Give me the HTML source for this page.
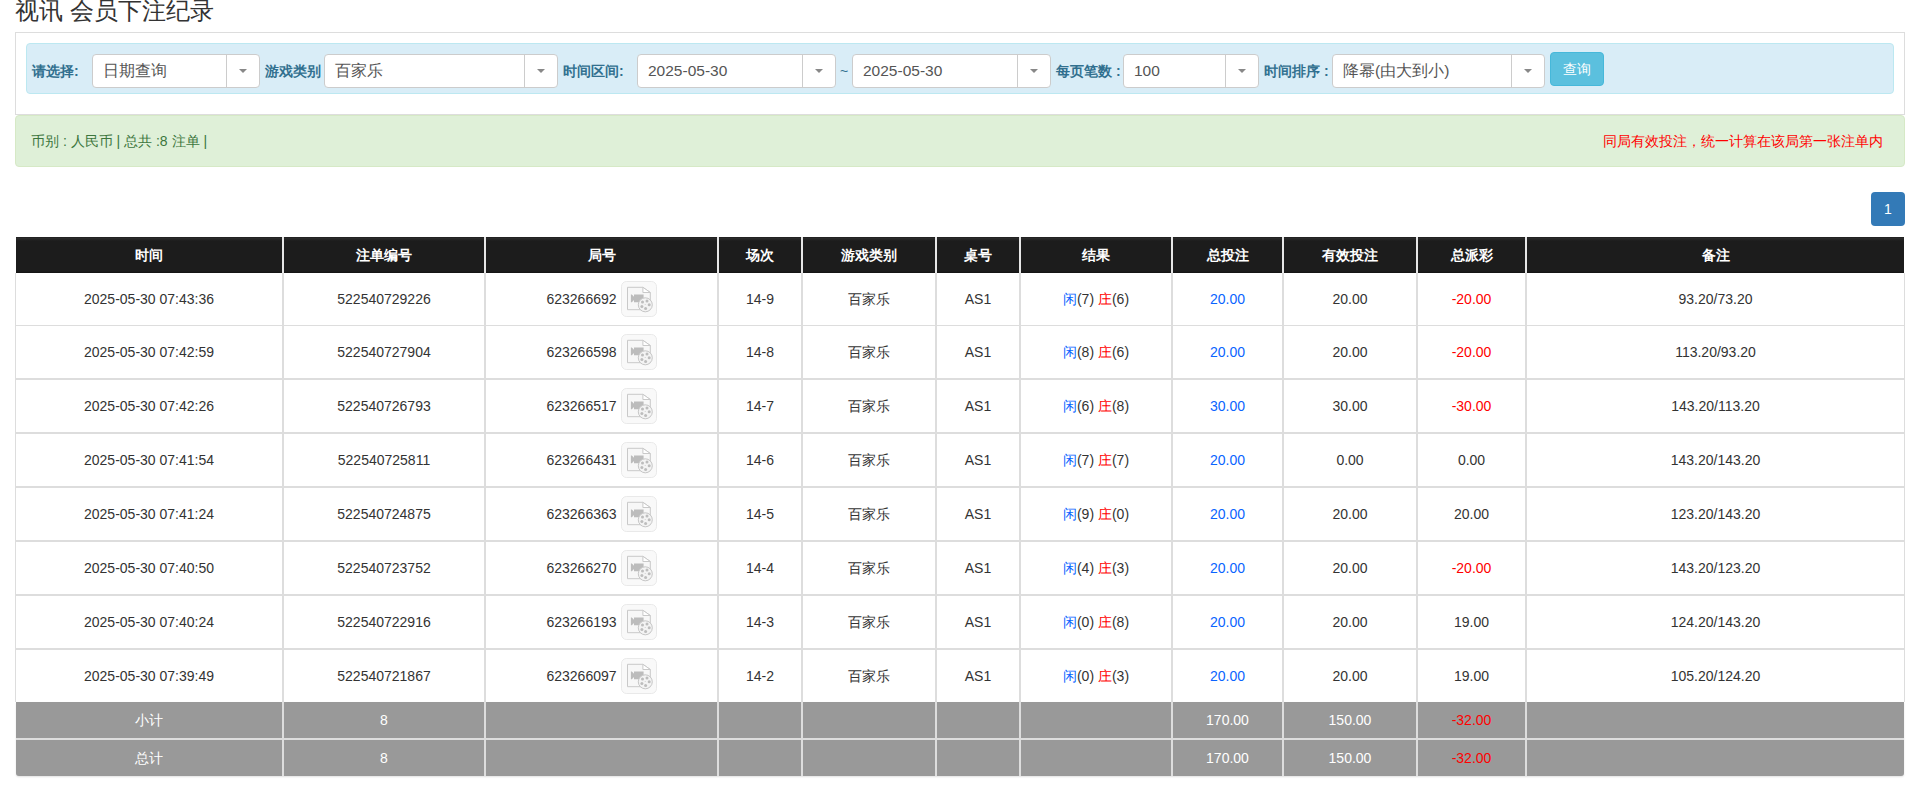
<!DOCTYPE html><html><head><meta charset="utf-8"><style>
html,body{margin:0;padding:0;background:#fff;width:1906px;height:791px;overflow:hidden;position:relative;font-family:"Liberation Sans",sans-serif;color:#333;font-size:14px}
.abs{position:absolute}
.title{position:absolute;left:15px;top:-4px;font-size:24px;line-height:30px;color:#333;white-space:nowrap}
.panel{position:absolute;left:15px;top:32px;width:1888px;height:81px;border:1px solid #ddd;border-bottom:1px solid #ddd;background:#fff}
.info{position:absolute;left:26px;top:43px;width:1866px;height:49px;background:#d9edf7;border:1px solid #bce8f1;border-radius:4px}
.lbl{position:absolute;top:63px;font-size:14px;line-height:16px;font-weight:bold;color:#31708f;white-space:nowrap}
.sel{position:absolute;top:54px;height:32px;background:#fff;border:1px solid #ccc;border-radius:4px;box-sizing:content-box}
.sel .t{position:absolute;left:10px;top:7px;font-size:15.5px;line-height:17px;color:#555;white-space:nowrap}
.sel .sep{position:absolute;top:0;bottom:0;width:1px;background:#ccc}
.sel .arr{position:absolute;top:14px;width:0;height:0;border-left:4px solid transparent;border-right:4px solid transparent;border-top:4px solid #888}
.btn{position:absolute;left:1550px;top:52px;width:52px;height:32px;background:#5bc0de;border:1px solid #46b8da;border-radius:4px;color:#fff;font-size:14px;line-height:32px;text-align:center}
.ok{position:absolute;left:15px;top:115px;width:1888px;height:50px;background:#dff0d8;border:1px solid #d6e9c6;border-radius:4px}
.oktxt{position:absolute;left:31px;top:133px;font-size:14px;line-height:16px;color:#3c763d;white-space:nowrap}
.redtxt{position:absolute;right:23px;top:133px;font-size:14px;line-height:16px;color:#f00;white-space:nowrap}
.page{position:absolute;left:1871px;top:192px;width:34px;height:34px;background:#337ab7;border-radius:4px;color:#fff;font-size:14px;line-height:34px;text-align:center}
.row{position:absolute;left:0;width:1906px}
.c{position:absolute;top:0;bottom:0;text-align:center;white-space:nowrap}
.hd{top:237px;height:36px;}
.hd .c{background:linear-gradient(#1f1f1f,#2a2a2a 1.5px,#1c1c1c 4px,#1c1c1c 34px,#121212 36px);color:#fff;font-weight:bold;line-height:36px}
.bd .c{background:#fff;line-height:52px}
.ft .c{background:#999;color:#fff;line-height:36px}
.ft2 .c:first-child{border-bottom-left-radius:3px}.ft2 .c:last-child{border-bottom-right-radius:3px}
.vl{position:absolute;background:#ddd}
.vbtn{display:inline-block;vertical-align:middle;margin-left:4px;position:relative;top:-1px}
.b{color:#0a64ff}.r{color:#f00}
</style></head><body>
<div class="title">视讯 会员下注纪录</div>
<div class="panel"></div><div class="info"></div>
<div class="lbl" style="left:32px">请选择:</div>
<div class="sel" style="left:92px;width:166px"><span class="t">日期查询</span><span class="sep" style="left:133px"></span><span class="arr" style="left:146px"></span></div>
<div class="lbl" style="left:265px">游戏类别</div>
<div class="sel" style="left:324px;width:232px"><span class="t">百家乐</span><span class="sep" style="left:199px"></span><span class="arr" style="left:212px"></span></div>
<div class="lbl" style="left:563px">时间区间:</div>
<div class="sel" style="left:637px;width:197px"><span class="t">2025-05-30</span><span class="sep" style="left:164px"></span><span class="arr" style="left:177px"></span></div>
<div class="lbl" style="left:840px;font-weight:normal">~</div>
<div class="sel" style="left:852px;width:197px"><span class="t">2025-05-30</span><span class="sep" style="left:164px"></span><span class="arr" style="left:177px"></span></div>
<div class="lbl" style="left:1056px">每页笔数 :</div>
<div class="sel" style="left:1123px;width:134px"><span class="t">100</span><span class="sep" style="left:101px"></span><span class="arr" style="left:114px"></span></div>
<div class="lbl" style="left:1264px">时间排序 :</div>
<div class="sel" style="left:1332px;width:211px"><span class="t">降幂(由大到小)</span><span class="sep" style="left:178px"></span><span class="arr" style="left:191px"></span></div>
<div class="btn">查询</div>
<div class="ok"></div><div class="oktxt">币别 : 人民币 | 总共 :8 注单 |</div><div class="redtxt">同局有效投注，统一计算在该局第一张注单内</div>
<div class="page">1</div>
<div class="vl" style="left:16px;top:237px;width:1888px;height:36px;background:#e6e6e6"></div>
<div class="vl" style="left:15px;top:273px;width:1890px;height:429px"></div>
<div class="row hd"><div class="c " style="left:16px;width:266px">时间</div><div class="c " style="left:284px;width:200px">注单编号</div><div class="c " style="left:486px;width:231px">局号</div><div class="c " style="left:719px;width:82px">场次</div><div class="c " style="left:803px;width:132px">游戏类别</div><div class="c " style="left:937px;width:82px">桌号</div><div class="c " style="left:1021px;width:150px">结果</div><div class="c " style="left:1173px;width:109px">总投注</div><div class="c " style="left:1284px;width:132px">有效投注</div><div class="c " style="left:1418px;width:107px">总派彩</div><div class="c " style="left:1527px;width:377px">备注</div></div>
<div class="row bd" style="top:273px;height:52px"><div class="c " style="left:16px;width:266px">2025-05-30 07:43:36</div><div class="c " style="left:284px;width:200px">522540729226</div><div class="c " style="left:486px;width:231px">623266692<svg class="vbtn" width="36" height="36" viewBox="0 0 36 36"><rect x="0.5" y="0.5" width="35" height="35" rx="5" fill="#f9f9f9" stroke="#e9e9e9"/><path d="M6.5 6.3h15.4l7.4 5.2v17.2h-22.8z" fill="#f7f7f7" stroke="#c9c9c9" stroke-width="1"/><path d="M21.9 6.3v5.2h7.4z" fill="#fff" stroke="#c9c9c9" stroke-width="1" stroke-linejoin="round"/><path d="M9.9 13.6h0.9l2.2 2.2v-2.2h9.6v7.6h-9.6v-2.2l-2.2 2.2h-0.9z" fill="#bcbcbc"/><circle cx="24.3" cy="23.8" r="7" fill="#f3f3f3" stroke="#c6c6c6" stroke-width="1"/><circle cx="21.5" cy="20.9" r="1.5" fill="#bdbdbd"/><circle cx="26" cy="20" r="1.5" fill="#bdbdbd"/><circle cx="28.2" cy="23.8" r="1.5" fill="#bdbdbd"/><circle cx="24.6" cy="27.4" r="1.5" fill="#bdbdbd"/><circle cx="20.9" cy="25.5" r="1.5" fill="#bdbdbd"/><circle cx="24.2" cy="23.5" r="0.6" fill="#ccc"/></svg></div><div class="c " style="left:719px;width:82px">14-9</div><div class="c " style="left:803px;width:132px">百家乐</div><div class="c " style="left:937px;width:82px">AS1</div><div class="c " style="left:1021px;width:150px"><span class="b">闲</span>(7) <span class="r">庄</span>(6)</div><div class="c " style="left:1173px;width:109px"><span class="b">20.00</span></div><div class="c " style="left:1284px;width:132px">20.00</div><div class="c " style="left:1418px;width:107px"><span class="r">-20.00</span></div><div class="c " style="left:1527px;width:377px">93.20/73.20</div></div>
<div class="row bd" style="top:326px;height:52px"><div class="c " style="left:16px;width:266px">2025-05-30 07:42:59</div><div class="c " style="left:284px;width:200px">522540727904</div><div class="c " style="left:486px;width:231px">623266598<svg class="vbtn" width="36" height="36" viewBox="0 0 36 36"><rect x="0.5" y="0.5" width="35" height="35" rx="5" fill="#f9f9f9" stroke="#e9e9e9"/><path d="M6.5 6.3h15.4l7.4 5.2v17.2h-22.8z" fill="#f7f7f7" stroke="#c9c9c9" stroke-width="1"/><path d="M21.9 6.3v5.2h7.4z" fill="#fff" stroke="#c9c9c9" stroke-width="1" stroke-linejoin="round"/><path d="M9.9 13.6h0.9l2.2 2.2v-2.2h9.6v7.6h-9.6v-2.2l-2.2 2.2h-0.9z" fill="#bcbcbc"/><circle cx="24.3" cy="23.8" r="7" fill="#f3f3f3" stroke="#c6c6c6" stroke-width="1"/><circle cx="21.5" cy="20.9" r="1.5" fill="#bdbdbd"/><circle cx="26" cy="20" r="1.5" fill="#bdbdbd"/><circle cx="28.2" cy="23.8" r="1.5" fill="#bdbdbd"/><circle cx="24.6" cy="27.4" r="1.5" fill="#bdbdbd"/><circle cx="20.9" cy="25.5" r="1.5" fill="#bdbdbd"/><circle cx="24.2" cy="23.5" r="0.6" fill="#ccc"/></svg></div><div class="c " style="left:719px;width:82px">14-8</div><div class="c " style="left:803px;width:132px">百家乐</div><div class="c " style="left:937px;width:82px">AS1</div><div class="c " style="left:1021px;width:150px"><span class="b">闲</span>(8) <span class="r">庄</span>(6)</div><div class="c " style="left:1173px;width:109px"><span class="b">20.00</span></div><div class="c " style="left:1284px;width:132px">20.00</div><div class="c " style="left:1418px;width:107px"><span class="r">-20.00</span></div><div class="c " style="left:1527px;width:377px">113.20/93.20</div></div>
<div class="row bd" style="top:380px;height:52px"><div class="c " style="left:16px;width:266px">2025-05-30 07:42:26</div><div class="c " style="left:284px;width:200px">522540726793</div><div class="c " style="left:486px;width:231px">623266517<svg class="vbtn" width="36" height="36" viewBox="0 0 36 36"><rect x="0.5" y="0.5" width="35" height="35" rx="5" fill="#f9f9f9" stroke="#e9e9e9"/><path d="M6.5 6.3h15.4l7.4 5.2v17.2h-22.8z" fill="#f7f7f7" stroke="#c9c9c9" stroke-width="1"/><path d="M21.9 6.3v5.2h7.4z" fill="#fff" stroke="#c9c9c9" stroke-width="1" stroke-linejoin="round"/><path d="M9.9 13.6h0.9l2.2 2.2v-2.2h9.6v7.6h-9.6v-2.2l-2.2 2.2h-0.9z" fill="#bcbcbc"/><circle cx="24.3" cy="23.8" r="7" fill="#f3f3f3" stroke="#c6c6c6" stroke-width="1"/><circle cx="21.5" cy="20.9" r="1.5" fill="#bdbdbd"/><circle cx="26" cy="20" r="1.5" fill="#bdbdbd"/><circle cx="28.2" cy="23.8" r="1.5" fill="#bdbdbd"/><circle cx="24.6" cy="27.4" r="1.5" fill="#bdbdbd"/><circle cx="20.9" cy="25.5" r="1.5" fill="#bdbdbd"/><circle cx="24.2" cy="23.5" r="0.6" fill="#ccc"/></svg></div><div class="c " style="left:719px;width:82px">14-7</div><div class="c " style="left:803px;width:132px">百家乐</div><div class="c " style="left:937px;width:82px">AS1</div><div class="c " style="left:1021px;width:150px"><span class="b">闲</span>(6) <span class="r">庄</span>(8)</div><div class="c " style="left:1173px;width:109px"><span class="b">30.00</span></div><div class="c " style="left:1284px;width:132px">30.00</div><div class="c " style="left:1418px;width:107px"><span class="r">-30.00</span></div><div class="c " style="left:1527px;width:377px">143.20/113.20</div></div>
<div class="row bd" style="top:434px;height:52px"><div class="c " style="left:16px;width:266px">2025-05-30 07:41:54</div><div class="c " style="left:284px;width:200px">522540725811</div><div class="c " style="left:486px;width:231px">623266431<svg class="vbtn" width="36" height="36" viewBox="0 0 36 36"><rect x="0.5" y="0.5" width="35" height="35" rx="5" fill="#f9f9f9" stroke="#e9e9e9"/><path d="M6.5 6.3h15.4l7.4 5.2v17.2h-22.8z" fill="#f7f7f7" stroke="#c9c9c9" stroke-width="1"/><path d="M21.9 6.3v5.2h7.4z" fill="#fff" stroke="#c9c9c9" stroke-width="1" stroke-linejoin="round"/><path d="M9.9 13.6h0.9l2.2 2.2v-2.2h9.6v7.6h-9.6v-2.2l-2.2 2.2h-0.9z" fill="#bcbcbc"/><circle cx="24.3" cy="23.8" r="7" fill="#f3f3f3" stroke="#c6c6c6" stroke-width="1"/><circle cx="21.5" cy="20.9" r="1.5" fill="#bdbdbd"/><circle cx="26" cy="20" r="1.5" fill="#bdbdbd"/><circle cx="28.2" cy="23.8" r="1.5" fill="#bdbdbd"/><circle cx="24.6" cy="27.4" r="1.5" fill="#bdbdbd"/><circle cx="20.9" cy="25.5" r="1.5" fill="#bdbdbd"/><circle cx="24.2" cy="23.5" r="0.6" fill="#ccc"/></svg></div><div class="c " style="left:719px;width:82px">14-6</div><div class="c " style="left:803px;width:132px">百家乐</div><div class="c " style="left:937px;width:82px">AS1</div><div class="c " style="left:1021px;width:150px"><span class="b">闲</span>(7) <span class="r">庄</span>(7)</div><div class="c " style="left:1173px;width:109px"><span class="b">20.00</span></div><div class="c " style="left:1284px;width:132px">0.00</div><div class="c " style="left:1418px;width:107px">0.00</div><div class="c " style="left:1527px;width:377px">143.20/143.20</div></div>
<div class="row bd" style="top:488px;height:52px"><div class="c " style="left:16px;width:266px">2025-05-30 07:41:24</div><div class="c " style="left:284px;width:200px">522540724875</div><div class="c " style="left:486px;width:231px">623266363<svg class="vbtn" width="36" height="36" viewBox="0 0 36 36"><rect x="0.5" y="0.5" width="35" height="35" rx="5" fill="#f9f9f9" stroke="#e9e9e9"/><path d="M6.5 6.3h15.4l7.4 5.2v17.2h-22.8z" fill="#f7f7f7" stroke="#c9c9c9" stroke-width="1"/><path d="M21.9 6.3v5.2h7.4z" fill="#fff" stroke="#c9c9c9" stroke-width="1" stroke-linejoin="round"/><path d="M9.9 13.6h0.9l2.2 2.2v-2.2h9.6v7.6h-9.6v-2.2l-2.2 2.2h-0.9z" fill="#bcbcbc"/><circle cx="24.3" cy="23.8" r="7" fill="#f3f3f3" stroke="#c6c6c6" stroke-width="1"/><circle cx="21.5" cy="20.9" r="1.5" fill="#bdbdbd"/><circle cx="26" cy="20" r="1.5" fill="#bdbdbd"/><circle cx="28.2" cy="23.8" r="1.5" fill="#bdbdbd"/><circle cx="24.6" cy="27.4" r="1.5" fill="#bdbdbd"/><circle cx="20.9" cy="25.5" r="1.5" fill="#bdbdbd"/><circle cx="24.2" cy="23.5" r="0.6" fill="#ccc"/></svg></div><div class="c " style="left:719px;width:82px">14-5</div><div class="c " style="left:803px;width:132px">百家乐</div><div class="c " style="left:937px;width:82px">AS1</div><div class="c " style="left:1021px;width:150px"><span class="b">闲</span>(9) <span class="r">庄</span>(0)</div><div class="c " style="left:1173px;width:109px"><span class="b">20.00</span></div><div class="c " style="left:1284px;width:132px">20.00</div><div class="c " style="left:1418px;width:107px">20.00</div><div class="c " style="left:1527px;width:377px">123.20/143.20</div></div>
<div class="row bd" style="top:542px;height:52px"><div class="c " style="left:16px;width:266px">2025-05-30 07:40:50</div><div class="c " style="left:284px;width:200px">522540723752</div><div class="c " style="left:486px;width:231px">623266270<svg class="vbtn" width="36" height="36" viewBox="0 0 36 36"><rect x="0.5" y="0.5" width="35" height="35" rx="5" fill="#f9f9f9" stroke="#e9e9e9"/><path d="M6.5 6.3h15.4l7.4 5.2v17.2h-22.8z" fill="#f7f7f7" stroke="#c9c9c9" stroke-width="1"/><path d="M21.9 6.3v5.2h7.4z" fill="#fff" stroke="#c9c9c9" stroke-width="1" stroke-linejoin="round"/><path d="M9.9 13.6h0.9l2.2 2.2v-2.2h9.6v7.6h-9.6v-2.2l-2.2 2.2h-0.9z" fill="#bcbcbc"/><circle cx="24.3" cy="23.8" r="7" fill="#f3f3f3" stroke="#c6c6c6" stroke-width="1"/><circle cx="21.5" cy="20.9" r="1.5" fill="#bdbdbd"/><circle cx="26" cy="20" r="1.5" fill="#bdbdbd"/><circle cx="28.2" cy="23.8" r="1.5" fill="#bdbdbd"/><circle cx="24.6" cy="27.4" r="1.5" fill="#bdbdbd"/><circle cx="20.9" cy="25.5" r="1.5" fill="#bdbdbd"/><circle cx="24.2" cy="23.5" r="0.6" fill="#ccc"/></svg></div><div class="c " style="left:719px;width:82px">14-4</div><div class="c " style="left:803px;width:132px">百家乐</div><div class="c " style="left:937px;width:82px">AS1</div><div class="c " style="left:1021px;width:150px"><span class="b">闲</span>(4) <span class="r">庄</span>(3)</div><div class="c " style="left:1173px;width:109px"><span class="b">20.00</span></div><div class="c " style="left:1284px;width:132px">20.00</div><div class="c " style="left:1418px;width:107px"><span class="r">-20.00</span></div><div class="c " style="left:1527px;width:377px">143.20/123.20</div></div>
<div class="row bd" style="top:596px;height:52px"><div class="c " style="left:16px;width:266px">2025-05-30 07:40:24</div><div class="c " style="left:284px;width:200px">522540722916</div><div class="c " style="left:486px;width:231px">623266193<svg class="vbtn" width="36" height="36" viewBox="0 0 36 36"><rect x="0.5" y="0.5" width="35" height="35" rx="5" fill="#f9f9f9" stroke="#e9e9e9"/><path d="M6.5 6.3h15.4l7.4 5.2v17.2h-22.8z" fill="#f7f7f7" stroke="#c9c9c9" stroke-width="1"/><path d="M21.9 6.3v5.2h7.4z" fill="#fff" stroke="#c9c9c9" stroke-width="1" stroke-linejoin="round"/><path d="M9.9 13.6h0.9l2.2 2.2v-2.2h9.6v7.6h-9.6v-2.2l-2.2 2.2h-0.9z" fill="#bcbcbc"/><circle cx="24.3" cy="23.8" r="7" fill="#f3f3f3" stroke="#c6c6c6" stroke-width="1"/><circle cx="21.5" cy="20.9" r="1.5" fill="#bdbdbd"/><circle cx="26" cy="20" r="1.5" fill="#bdbdbd"/><circle cx="28.2" cy="23.8" r="1.5" fill="#bdbdbd"/><circle cx="24.6" cy="27.4" r="1.5" fill="#bdbdbd"/><circle cx="20.9" cy="25.5" r="1.5" fill="#bdbdbd"/><circle cx="24.2" cy="23.5" r="0.6" fill="#ccc"/></svg></div><div class="c " style="left:719px;width:82px">14-3</div><div class="c " style="left:803px;width:132px">百家乐</div><div class="c " style="left:937px;width:82px">AS1</div><div class="c " style="left:1021px;width:150px"><span class="b">闲</span>(0) <span class="r">庄</span>(8)</div><div class="c " style="left:1173px;width:109px"><span class="b">20.00</span></div><div class="c " style="left:1284px;width:132px">20.00</div><div class="c " style="left:1418px;width:107px">19.00</div><div class="c " style="left:1527px;width:377px">124.20/143.20</div></div>
<div class="row bd" style="top:650px;height:52px"><div class="c " style="left:16px;width:266px">2025-05-30 07:39:49</div><div class="c " style="left:284px;width:200px">522540721867</div><div class="c " style="left:486px;width:231px">623266097<svg class="vbtn" width="36" height="36" viewBox="0 0 36 36"><rect x="0.5" y="0.5" width="35" height="35" rx="5" fill="#f9f9f9" stroke="#e9e9e9"/><path d="M6.5 6.3h15.4l7.4 5.2v17.2h-22.8z" fill="#f7f7f7" stroke="#c9c9c9" stroke-width="1"/><path d="M21.9 6.3v5.2h7.4z" fill="#fff" stroke="#c9c9c9" stroke-width="1" stroke-linejoin="round"/><path d="M9.9 13.6h0.9l2.2 2.2v-2.2h9.6v7.6h-9.6v-2.2l-2.2 2.2h-0.9z" fill="#bcbcbc"/><circle cx="24.3" cy="23.8" r="7" fill="#f3f3f3" stroke="#c6c6c6" stroke-width="1"/><circle cx="21.5" cy="20.9" r="1.5" fill="#bdbdbd"/><circle cx="26" cy="20" r="1.5" fill="#bdbdbd"/><circle cx="28.2" cy="23.8" r="1.5" fill="#bdbdbd"/><circle cx="24.6" cy="27.4" r="1.5" fill="#bdbdbd"/><circle cx="20.9" cy="25.5" r="1.5" fill="#bdbdbd"/><circle cx="24.2" cy="23.5" r="0.6" fill="#ccc"/></svg></div><div class="c " style="left:719px;width:82px">14-2</div><div class="c " style="left:803px;width:132px">百家乐</div><div class="c " style="left:937px;width:82px">AS1</div><div class="c " style="left:1021px;width:150px"><span class="b">闲</span>(0) <span class="r">庄</span>(3)</div><div class="c " style="left:1173px;width:109px"><span class="b">20.00</span></div><div class="c " style="left:1284px;width:132px">20.00</div><div class="c " style="left:1418px;width:107px">19.00</div><div class="c " style="left:1527px;width:377px">105.20/124.20</div></div>
<div class="vl" style="left:16px;top:702px;width:1888px;height:74px;background:#ddd;border-radius:0 0 3px 3px;box-shadow:0 1px 2px rgba(0,0,0,.12)"></div>
<div class="row ft" style="top:702px;height:36px"><div class="c " style="left:16px;width:266px">小计</div><div class="c " style="left:284px;width:200px">8</div><div class="c " style="left:486px;width:231px"></div><div class="c " style="left:719px;width:82px"></div><div class="c " style="left:803px;width:132px"></div><div class="c " style="left:937px;width:82px"></div><div class="c " style="left:1021px;width:150px"></div><div class="c " style="left:1173px;width:109px">170.00</div><div class="c " style="left:1284px;width:132px">150.00</div><div class="c " style="left:1418px;width:107px"><span class="r">-32.00</span></div><div class="c " style="left:1527px;width:377px"></div></div>
<div class="row ft ft2" style="top:740px;height:36px"><div class="c " style="left:16px;width:266px">总计</div><div class="c " style="left:284px;width:200px">8</div><div class="c " style="left:486px;width:231px"></div><div class="c " style="left:719px;width:82px"></div><div class="c " style="left:803px;width:132px"></div><div class="c " style="left:937px;width:82px"></div><div class="c " style="left:1021px;width:150px"></div><div class="c " style="left:1173px;width:109px">170.00</div><div class="c " style="left:1284px;width:132px">150.00</div><div class="c " style="left:1418px;width:107px"><span class="r">-32.00</span></div><div class="c " style="left:1527px;width:377px"></div></div>
</body></html>
